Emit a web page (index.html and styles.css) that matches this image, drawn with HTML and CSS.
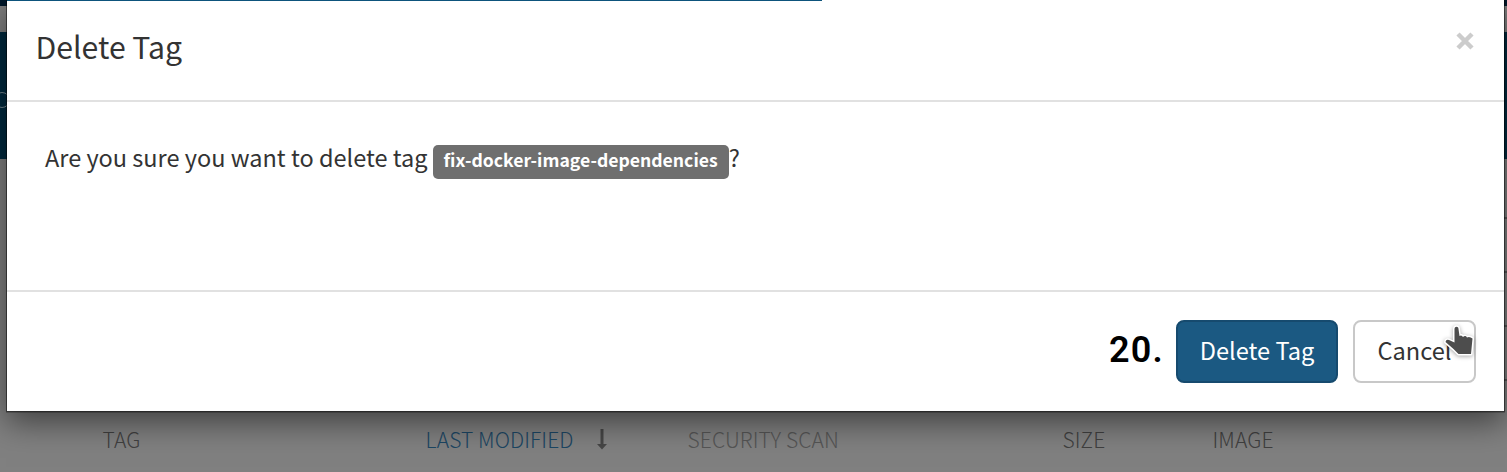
FILE: index.html
```html
<!DOCTYPE html>
<html lang="en">
<head>
<meta charset="utf-8">
<title>Delete Tag</title>
<link rel="stylesheet" href="styles.css">
</head>
<body>
<div class="page">
  <div class="topbar"></div>
  <div class="gap"></div>
  <div class="hero"><span class="ring"></span></div>
  <div class="rows">
    <i></i><i></i><i></i><i></i>
  </div>
  <div class="table-head">
    <span>TAG</span>
    <span class="sorted">LAST MODIFIED<svg width="12" height="24" viewBox="0 0 12 24"><path d="M4.500 2h3v15H11L6 22.500 1 17h3.500z" fill="#464646"/></svg></span>
    <span class="scan">SECURITY SCAN</span>
    <span>SIZE</span>
    <span>IMAGE</span>
  </div>
</div>
<div class="modal">
  <div class="progress"></div>
  <header class="modal-header">
    <h1>Delete Tag</h1>
    <button class="close" aria-label="Close"><svg width="18" height="18" viewBox="0 0 18 18"><path d="M2 2l14 14M16 2L2 16" stroke="#ccc" stroke-width="4.500"/></svg></button>
  </header>
  <div class="modal-body"><p>Are you sure you want to delete tag</p><span class="label">fix-docker-image-dependencies</span><p class="mark">?</p></div>
  <footer class="modal-footer">
    <span class="step">20.</span>
    <button class="btn primary">Delete Tag</button>
    <button class="btn">Cancel</button>
    <svg class="pointer" width="36" height="38" viewBox="0 0 36 38"><path d="M13.500 7C13.500 3.900 17.500 3.900 17.500 7L18.500 14Q20.500 12.500 22 15Q24.500 13 26 15.500Q28.500 14 31.500 16.500L30 32H17.500L12.500 27 4.500 20Q5 17 8 18L13.500 20.500z" fill="#4d4d4d" stroke="#fff" stroke-width="3" paint-order="stroke" stroke-linejoin="round"/></svg>
  </footer>
</div>
</body>
</html>
```
FILE: styles.css
```css
* { box-sizing: border-box; }
body { margin: 0; height: 472px; overflow: hidden; position: relative; font-family: "Noto Sans CJK JP", "Noto Sans", sans-serif; color: #333; background: #808080; }
.page { height: 472px; display: flex; flex-direction: column; }
.topbar { height: 6px; background: #00182b; }
.gap { height: 26px; background: #808080; }
.hero { height: 127px; background: #002a3f; overflow: hidden; }
.ring { display: block; width: 16px; height: 16px; margin: 60px 0 0 -6px; border: 1px solid #748790; border-radius: 50%; }
.rows { height: 253px; display: flex; flex-direction: column; align-items: flex-end; padding-top: 58px; gap: 52px; }
.rows i { width: 5px; height: 2px; background: #555; }
.table-head { height: 60px; padding: 0 0 6px 102.500px; display: grid; grid-template-columns: 323px 262px 375px 150px 1fr; align-items: center; font-size: 21px; font-weight: 300; line-height: 30px; color: #404040; letter-spacing: .1px; }
.sorted { color: #1c4663; display: flex; align-items: center; gap: 22px; }
.scan { color: #555; }
.modal { position: absolute; left: 6px; top: -2px; width: 1499px; height: 414px; background: #fff; background-clip: padding-box; border: 1px solid rgba(0,0,0,.35); box-shadow: 0 1px 0 rgba(0,0,0,.2), 0 10px 30px rgba(0,0,0,.5); display: flex; flex-direction: column; }
.progress { width: 815px; height: 2px; background: #0d547c; flex: none; }
.modal-header { height: 101px; flex: none; border-bottom: 2px solid #e1e1e1; padding: 0 30px 0 28.500px; display: flex; justify-content: space-between; }
h1 { margin: 21px 0 0; font-size: 30.200px; line-height: 48px; font-weight: 400; }
.close { border: 0; padding: 0; background: none; height: 18px; margin-top: 31px; }
.close svg { display: block; }
.modal-body { height: 190px; flex: none; border-bottom: 2px solid #e1e1e1; padding: 37px 38px; display: flex; align-items: flex-start; font-size: 23.500px; line-height: 36px; white-space: nowrap; }
.modal-body p { margin: 0; }
.label { height: 34px; margin: 6px 0 0 5px; padding: 0 11px; border-radius: 5px; background: #6f6f6f; color: #fff; font-size: 17.600px; line-height: 29px; font-weight: 700; }
.modal-footer { flex: 1; padding: 28px 28px 0; display: flex; justify-content: flex-end; position: relative; }
.step { margin-right: 12px; font-family: Roboto, sans-serif; font-size: 36px; line-height: 61px; font-weight: 600; letter-spacing: 1.200px; color: #000; }
.btn { width: 123px; height: 63px; padding: 0 0 3px; border: 2px solid #c8c8c8; border-radius: 8px; background: #fff; color: #333; font: 23.600px/36px "Noto Sans CJK JP", "Noto Sans", sans-serif; }
.primary { width: 162px; margin-right: 15px; border-color: #164a6e; background: #1b5982; color: #fff; }
.pointer { position: absolute; left: 1434px; top: 30px; filter: drop-shadow(0 1px 2px rgba(0,0,0,.35)); }
```
